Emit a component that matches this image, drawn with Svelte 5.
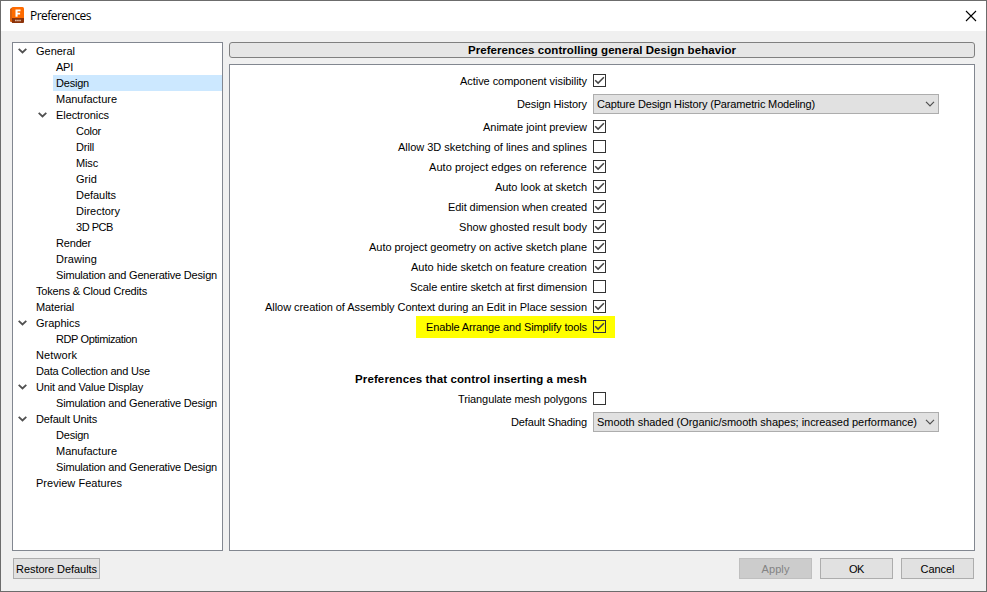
<script>
  // Each entry: label, depth, text width, expandable
  const tree = [
    ['General', 0, 39, true],
    ['API', 1, 17],
    ['Design', 1, 33],
    ['Manufacture', 1, 61],
    ['Electronics', 1, 53, true],
    ['Color', 2, 25],
    ['Drill', 2, 18],
    ['Misc', 2, 22],
    ['Grid', 2, 21],
    ['Defaults', 2, 40],
    ['Directory', 2, 44],
    ['3D PCB', 2, 37],
    ['Render', 1, 35],
    ['Drawing', 1, 41],
    ['Simulation and Generative Design', 1, 161],
    ['Tokens & Cloud Credits', 0, 111],
    ['Material', 0, 38],
    ['Graphics', 0, 44, true],
    ['RDP Optimization', 1, 81],
    ['Network', 0, 41],
    ['Data Collection and Use', 0, 114],
    ['Unit and Value Display', 0, 107, true],
    ['Simulation and Generative Design', 1, 161],
    ['Default Units', 0, 61, true],
    ['Design', 1, 33],
    ['Manufacture', 1, 61],
    ['Simulation and Generative Design', 1, 161],
    ['Preview Features', 0, 86]
  ].map(([label, depth, width, open]) => ({ label, depth, width, open }));
  const selected = 2;

  const general = [
    { label: 'Active component visibility', width: 127, checked: true },
    { label: 'Design History', width: 70, value: 'Capture Design History (Parametric Modeling)', valueWidth: 218 },
    { label: 'Animate joint preview', width: 104, checked: true },
    { label: 'Allow 3D sketching of lines and splines', width: 189, checked: false },
    { label: 'Auto project edges on reference', width: 158, checked: true },
    { label: 'Auto look at sketch', width: 92, checked: true },
    { label: 'Edit dimension when created', width: 139, checked: true },
    { label: 'Show ghosted result body', width: 128, checked: true },
    { label: 'Auto project geometry on active sketch plane', width: 218, checked: true },
    { label: 'Auto hide sketch on feature creation', width: 176, checked: true },
    { label: 'Scale entire sketch at first dimension', width: 177, checked: false },
    { label: 'Allow creation of Assembly Context during an Edit in Place session', width: 322, checked: true },
    { label: 'Enable Arrange and Simplify tools', width: 161, checked: true, marked: true }
  ];
  const mesh = [
    { label: 'Triangulate mesh polygons', width: 129, checked: false },
    { label: 'Default Shading', width: 76, value: 'Smooth shaded (Organic/smooth shapes; increased performance)', valueWidth: 320 }
  ];

  // Spreads letters so that a label fills its nominal width
  function fit(node, width) {
    const natural = node.getBoundingClientRect().width;
    const spacing = (width - natural) / node.textContent.length;
    node.style.letterSpacing = `${spacing}px`;
  }
</script>

{#snippet row(item)}
  <div class="row" class:combo-row={item.value} class:marked={item.marked}>
    <div class="label"><span use:fit={item.width}>{item.label}</span></div>
    {#if item.value}
      <div class="combo">
        <span use:fit={item.valueWidth}>{item.value}</span>
        <svg width="10" height="6" viewBox="0 0 10 6"><path d="M1 .8l4 4 4-4" fill="none" stroke="#505050" stroke-width="1.2" /></svg>
      </div>
    {:else}
      <div class="check">
        {#if item.checked}
          <svg width="11" height="11" viewBox="0 0 11 11"><path d="M1.2 5.2l2.9 2.9L9.9 2.3" fill="none" stroke="#444" stroke-width="1.5" /></svg>
        {/if}
      </div>
    {/if}
  </div>
{/snippet}

<div class="window">
  <header>
    <svg class="logo" width="16" height="17" viewBox="0 0 16 17">
      <path d="M0 2l2.500-2v15.500L0 14.500z" fill="#d9600f" />
      <path d="M2 1q0-1 1-1h9.500q1.500 0 1.500 1.500V11H2z" fill="#ff6b00" />
      <path d="M2 11h12v4q0 1-1 1H2z" fill="#8c3309" />
      <path d="M5.500 2.500h5v1.800H7.600v1.400h2.500v1.700H7.600v2.300H5.500z" fill="#fff" />
      <path d="M5 13.500h1.700m.4 0h1.700m.4 0h1.700" stroke="#dcb8a4" stroke-width="1.600" />
    </svg>
    <h1><span use:fit={61}>Preferences</span></h1>
    <svg class="close" width="12" height="12" viewBox="0 0 12 12"><path d="M1 1l10 10M11 1L1 11" stroke="#000" stroke-width="1.1" /></svg>
  </header>

  <main>
    <nav>
      {#each tree as item, i}
        <div class="node d{item.depth}">
          <span class="arrow">
            {#if item.open}
              <svg width="9" height="6" viewBox="0 0 9 6"><path d="M.7.9l3.800 3.600L8.300.9" fill="none" stroke="#505050" stroke-width="1.800" /></svg>
            {/if}
          </span>
          <div class="name" class:selected={i === selected}><span use:fit={item.width}>{item.label}</span></div>
        </div>
      {/each}
    </nav>

    <section>
      <h2><span use:fit={268}>Preferences controlling general Design behavior</span></h2>
      <div class="panel">
        {#each general as item}{@render row(item)}{/each}
        <div class="row heading">
          <div class="label"><span use:fit={232}>Preferences that control inserting a mesh</span></div>
        </div>
        {#each mesh as item}{@render row(item)}{/each}
      </div>
    </section>
  </main>

  <footer>
    <button class="restore"><span use:fit={81}>Restore Defaults</span></button>
    <button class="off"><span use:fit={28}>Apply</span></button>
    <button><span use:fit={15}>OK</span></button>
    <button><span use:fit={34}>Cancel</span></button>
  </footer>
</div>

<style>
  .window {
    box-sizing: border-box;
    width: 987px;
    height: 592px;
    display: flex;
    flex-direction: column;
    border: 1px solid #6c6c6c;
    background: #f0f0f0;
    font: 11px/16px 'Liberation Sans', Arial, sans-serif;
    color: #000;
    white-space: nowrap;
  }
  svg { display: block; flex: none; }
  h1, h2 { margin: 0; }
  header {
    height: 30px;
    display: flex;
    align-items: center;
    padding: 0 9px;
    background: #fff;
  }
  .logo { margin-bottom: 1px; }
  h1 {
    flex: 1;
    padding-left: 4px;
    font: 12px/16px 'Open Sans', 'Noto Sans', sans-serif;
  }
  .close { margin-bottom: 1px; }
  main {
    display: flex;
    gap: 6px;
    height: 509px;
    padding: 11px 11px 0;
  }
  nav {
    box-sizing: border-box;
    width: 211px;
    border: 1px solid #828790;
    background: #fff;
  }
  .node { display: flex; height: 16px; }
  .d1 { padding-left: 20px; }
  .d2 { padding-left: 40px; }
  .arrow { width: 20px; padding: 5px 0 0 5px; box-sizing: border-box; }
  .name { flex: 1; padding-left: 3px; line-height: 17px; height: 16px; }
  .selected { background: #cce8ff; }
  section {
    flex: 1;
    display: flex;
    flex-direction: column;
    gap: 6px;
  }
  h2 {
    box-sizing: border-box;
    height: 16px;
    border: 1px solid #808080;
    border-radius: 3px;
    background: #e6e6e6;
    font-size: 11.5px;
    line-height: 14px;
    text-align: center;
  }
  .panel {
    flex: 1;
    padding-top: 6px;
    border: 1px solid #828790;
    background: #fff;
  }
  .row {
    position: relative;
    display: flex;
    align-items: center;
    gap: 6px;
    height: 20px;
  }
  .combo-row { height: 26px; }
  .label { width: 357px; text-align: right; z-index: 1; }
  .heading { margin-top: 32px; font-size: 11.5px; font-weight: bold; }
  .marked::before {
    content: '';
    position: absolute;
    left: 186px;
    top: -1px;
    width: 199px;
    height: 22px;
    background: #ff0;
  }
  .check {
    box-sizing: border-box;
    width: 13px;
    height: 13px;
    margin-bottom: 1px;
    border: 1px solid #333;
    background: #fff;
    z-index: 1;
  }
  .marked .check { background: #ff0; }
  .combo {
    box-sizing: border-box;
    width: 346px;
    height: 20px;
    display: flex;
    align-items: center;
    justify-content: space-between;
    padding: 0 3px;
    border: 1px solid #adadad;
    background: #e1e1e1;
  }
  footer {
    display: flex;
    gap: 8px;
    padding: 7px 12px 0;
  }
  button {
    box-sizing: border-box;
    width: 73px;
    height: 21px;
    padding: 0;
    border: 1px solid #adadad;
    background: #e1e1e1;
    color: #000;
    font: inherit;
  }
  .restore { width: 87px; margin-right: auto; }
  .off { background: #ccc; border-color: #bfbfbf; color: #838383; }
</style>
